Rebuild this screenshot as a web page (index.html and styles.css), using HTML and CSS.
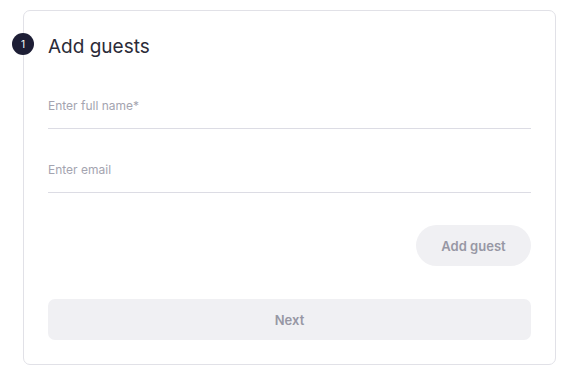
FILE: index.html
```html
<!DOCTYPE html>
<html>
<head>
<meta charset="utf-8">
<link rel="stylesheet" href="styles.css">
</head>
<body>
<div class="card">
  <span class="step">1</span>
  <h1 class="title">Add guests</h1>
  <div class="field"><input class="input" placeholder="Enter full name*"></div>
  <div class="field"><input class="input" placeholder="Enter email"></div>
  <div class="actions"><button class="pill">Add guest</button></div>
  <button class="next">Next</button>
</div>
</body>
</html>
```
FILE: styles.css
```css
* { box-sizing: border-box; }
html, body { margin: 0; padding: 0; background: #fff; }
body { font-family: Inter, "Noto Sans", sans-serif; }
.card {
  position: relative;
  margin: 10px 0 0 23px;
  width: 533px;
  height: 355px;
  border: 1px solid #e1e1e7;
  border-radius: 7px;
  padding: 24px 24px 0 24px;
  display: flex;
  flex-direction: column;
}
.step {
  position: absolute;
  left: -12px;
  top: 22px;
  width: 22px;
  height: 22px;
  border-radius: 50%;
  background: #1d1e35;
  color: #fff;
  font-size: 10px;
  display: flex;
  align-items: center;
  justify-content: center;
}
.title {
  margin: 0;
  font-weight: 400;
  font-size: 19px;
  line-height: 24px;
  color: #2b2b38;
}
.field {
  border-bottom: 1px solid #dcdce4;
  height: 64px;
  display: flex;
  align-items: flex-end;
}
.field:first-of-type { height: 70px; }
.input {
  border: 0;
  outline: 0;
  padding: 0;
  margin-bottom: 15px;
  width: 100%;
  font-family: inherit;
  font-size: 12px;
  color: #2b2b38;
}
.input::placeholder { color: #a4a4b0; }
.actions {
  display: flex;
  justify-content: flex-end;
  margin-top: 32px;
}
.pill {
  width: 115px;
  height: 41px;
  border: 0;
  border-radius: 21px;
  background: #f0f0f3;
  color: #9797a4;
  font-family: inherit;
  font-weight: 600;
  font-size: 13px;
}
.next {
  margin-top: 33px;
  height: 41px;
  border: 0;
  border-radius: 7px;
  background: #f0f0f3;
  color: #9797a4;
  font-family: inherit;
  font-weight: 600;
  font-size: 13px;
}
```
